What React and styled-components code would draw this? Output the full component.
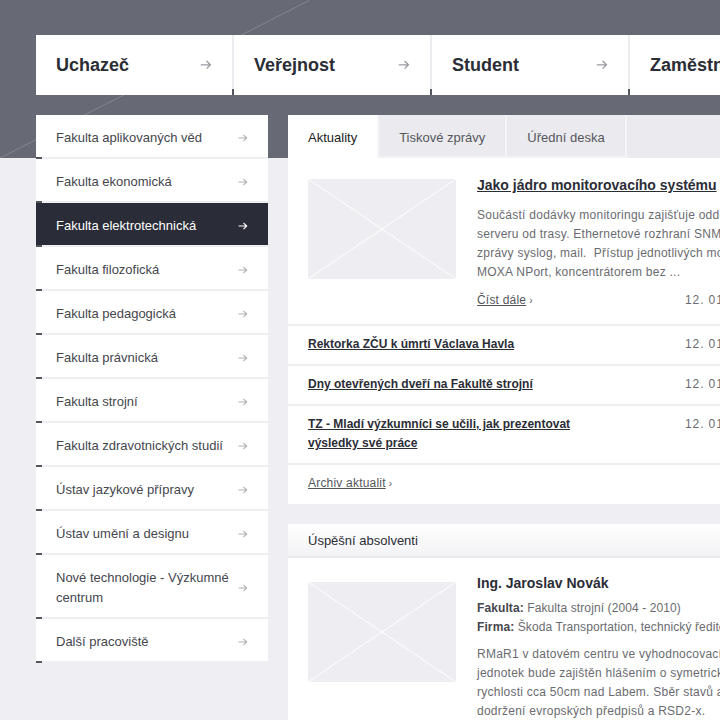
import styled, { createGlobalStyle, css } from "styled-components";

const GlobalStyle = createGlobalStyle`
  html, body {
    margin: 0;
    padding: 0;
  }
  body {
    overflow: hidden;
    font-family: "Liberation Sans", Arial, sans-serif;
    color: #2b2d36;
    background:
      linear-gradient(to bottom right, transparent calc(50% - 0.8px), rgba(255, 255, 255, 0.2) 50%, transparent calc(50% + 0.8px)) 0 0 / 310px 158px no-repeat,
      linear-gradient(#676a75, #676a75) 0 0 / 100% 158px no-repeat,
      #efeff3;
  }
`;

const Page = styled.div`
  width: 1000px;
  padding: 35px 0 0 36px;
  box-sizing: border-box;
`;

const TopNav = styled.nav`
  display: flex;
  height: 60px;
`;

const NavCard = styled.a`
  position: relative;
  flex: 0 0 196px;
  display: flex;
  align-items: center;
  justify-content: space-between;
  padding: 0 20px;
  box-sizing: border-box;
  background: #fff;
  color: #2b2d36;
  font-size: 18px;
  font-weight: bold;
  text-decoration: none;

  & + & {
    flex-basis: 198px;
    border-left: 2px solid #ececf0;
  }
  & + &::before {
    content: "";
    position: absolute;
    left: -2px;
    bottom: 0;
    width: 2px;
    height: 6px;
    background: #55575f;
  }
`;

const Columns = styled.div`
  display: flex;
  gap: 20px;
  margin-top: 20px;
  align-items: flex-start;
`;

const Sidebar = styled.ul`
  list-style: none;
  margin: 0;
  padding: 0;
  width: 232px;
  flex: 0 0 232px;
`;

const SideItem = styled.li`
  position: relative;
  display: flex;
  align-items: center;
  justify-content: space-between;
  gap: 4px;
  padding: 13px 20px 9px;
  font-size: 13px;
  line-height: 20px;
  background: #fff;
  color: #45464d;
  border-bottom: 2px solid #efeff3;

  &::after {
    content: "";
    position: absolute;
    left: 0;
    bottom: -2px;
    width: 6px;
    height: 2px;
    background: #55575f;
  }

  ${(props) =>
    props.$active &&
    css`
      background: #2a2c37;
      color: #fff;
    `}
`;

const ArrowIcon = styled.svg`
  flex: 0 0 auto;
  color: ${(props) => props.$color || "#a8a9ae"};
`;

const Main = styled.div`
  width: 507px;
  flex: 0 0 507px;
`;

const Panel = styled.section`
  background: #fff;
  & + & {
    margin-top: 20px;
  }
`;

const TabBar = styled.div`
  display: flex;
  height: 43px;
  background: #ebebef;
`;

const Tab = styled.div`
  padding: 2px 20px 0;
  line-height: 41px;
  font-size: 13px;
  color: #55565c;
  border-right: 2px solid #f4f4f6;
  box-shadow: inset 0 -2px 0 #f2f2f5;

  ${(props) =>
    props.$active &&
    css`
      background: #fff;
      color: #222;
      box-shadow: none;
    `}
`;

const Feature = styled.div`
  display: flex;
  gap: 21px;
  padding: 17px 20px 14px;
`;

const Placeholder = styled.div`
  flex: 0 0 148px;
  height: 100px;
  margin-top: 4px;
  background: #eeeef2;

  svg {
    display: block;
  }
`;

const FeatureBody = styled.div`
  flex: 1;
  min-width: 0;
`;

const FeatureTitle = styled.a`
  display: block;
  font-size: 14px;
  line-height: 20px;
  font-weight: bold;
  color: #2b2d36;
  text-decoration: underline;
  white-space: nowrap;
`;

const Text = styled.p`
  margin: ${(props) => props.$mt || 0}px 0 0;
  font-size: 12px;
  line-height: 19px;
  color: #6a6b70;
  letter-spacing: 0.25px;
  white-space: nowrap;
`;

const MetaRow = styled.div`
  display: flex;
  justify-content: space-between;
  margin-top: 9px;
  font-size: 12px;
  line-height: 19px;
`;

const MoreLink = styled.a`
  color: #55565c;
  letter-spacing: 0.2px;
  span {
    text-decoration: underline;
  }
  &::after {
    content: " ›";
    font-size: 10px;
    text-decoration: none;
  }
`;

const DateText = styled.span`
  width: 90px;
  flex: 0 0 90px;
  color: #6a6b70;
  font-size: 12px;
  letter-spacing: 0.9px;
  white-space: nowrap;
`;

const NewsRow = styled.div`
  display: flex;
  justify-content: space-between;
  padding: 9px 20px 10px;
  border-top: 2px solid #efeff3;
  font-size: 12px;
  line-height: 19px;
`;

const NewsTitle = styled.a`
  max-width: 280px;
  font-weight: bold;
  color: #2b2d36;
  text-decoration: underline;
`;

const PanelFooter = styled.div`
  padding: 9px 20px 11px;
  border-top: 2px solid #efeff3;
  font-size: 12px;
  line-height: 19px;
`;

const PanelHeader = styled.div`
  height: 32px;
  line-height: 34px;
  padding: 0 20px;
  font-size: 13px;
  color: #2b2d36;
  background: linear-gradient(#ffffff, #f3f3f6);
  border-bottom: 2px solid #eaeaee;
`;

const Person = styled.div`
  display: flex;
  gap: 21px;
  padding: 20px 20px 20px;
`;

const PersonBody = styled.div`
  flex: 1;
  min-width: 0;
  margin-top: -5px;
`;

const PersonName = styled.div`
  font-size: 14px;
  line-height: 20px;
  font-weight: bold;
  color: #2b2d36;
  white-space: nowrap;
`;

const InfoLine = styled.div`
  font-size: 12px;
  line-height: 19px;
  color: #6a6b70;
  letter-spacing: 0.1px;
  white-space: nowrap;
  b {
    color: #45464d;
  }
`;

const InfoBlock = styled.div`
  margin-top: 6px;
`;

function Arrow({ color, size = 12 }) {
  return (
    <ArrowIcon
      $color={color}
      width={size}
      height={size * 0.8}
      viewBox="0 0 12 10"
      fill="none"
      stroke="currentColor"
      strokeWidth="1.4"
    >
      <path d="M0.5 5h10.2M6.6 1l4 4-4 4" />
    </ArrowIcon>
  );
}

function ImagePlaceholder() {
  return (
    <Placeholder>
      <svg width="148" height="100" viewBox="0 0 148 100" preserveAspectRatio="none">
        <path d="M0 0L148 100M148 0L0 100" stroke="#fff" strokeWidth="1" />
      </svg>
    </Placeholder>
  );
}

const navItems = ["Uchazeč", "Veřejnost", "Student", "Zaměstnanec", "Absolvent"];

const faculties = [
  "Fakulta aplikovaných věd",
  "Fakulta ekonomická",
  "Fakulta elektrotechnická",
  "Fakulta filozofická",
  "Fakulta pedagogická",
  "Fakulta právnická",
  "Fakulta strojní",
  "Fakulta zdravotnických studií",
  "Ústav jazykové přípravy",
  "Ústav umění a designu",
  "Nové technologie - Výzkumné centrum",
  "Další pracoviště",
];

const news = [
  "Rektorka ZČU k úmrtí Václava Havla",
  "Dny otevřených dveří na Fakultě strojní",
  "TZ - Mladí výzkumníci se učili, jak prezentovat výsledky své práce",
];

export default function App() {
  return (
    <>
      <GlobalStyle />
      <Page>
        <TopNav>
          {navItems.map((item) => (
            <NavCard key={item}>
              {item}
              <Arrow color="#9a9ba1" size={12} />
            </NavCard>
          ))}
        </TopNav>

        <Columns>
          <Sidebar>
            {faculties.map((f, i) => (
              <SideItem key={f} $active={i === 2}>
                <span>{f}</span>
                <Arrow color={i === 2 ? "#fff" : "#b0b1b6"} size={10} />
              </SideItem>
            ))}
          </Sidebar>

          <Main>
            <Panel>
              <TabBar>
                <Tab $active>Aktuality</Tab>
                <Tab>Tiskové zprávy</Tab>
                <Tab>Úřední deska</Tab>
              </TabBar>
              <Feature>
                <ImagePlaceholder />
                <FeatureBody>
                  <FeatureTitle>Jako jádro monitorovacího systému</FeatureTitle>
                  <Text $mt={11}>
                    Součástí dodávky monitoringu zajišťuje oddělení
                    <br />
                    serveru od trasy. Ethernetové rozhraní SNMP pro
                    <br />
                    zprávy syslog, mail.&nbsp; Přístup jednotlivých modulů
                    <br />
                    MOXA NPort, koncentrátorem bez ...
                  </Text>
                  <MetaRow>
                    <MoreLink>
                      <span>Číst dále</span>
                    </MoreLink>
                    <DateText>12. 01. 2012</DateText>
                  </MetaRow>
                </FeatureBody>
              </Feature>
              {news.map((n) => (
                <NewsRow key={n}>
                  <NewsTitle>{n}</NewsTitle>
                  <DateText>12. 01. 2012</DateText>
                </NewsRow>
              ))}
              <PanelFooter>
                <MoreLink>
                  <span>Archiv aktualit</span>
                </MoreLink>
              </PanelFooter>
            </Panel>

            <Panel>
              <PanelHeader>Úspěšní absolventi</PanelHeader>
              <Person>
                <ImagePlaceholder />
                <PersonBody>
                  <PersonName>Ing. Jaroslav Novák</PersonName>
                  <InfoBlock>
                    <InfoLine>
                      <b>Fakulta:</b> Fakulta strojní (2004 - 2010)
                    </InfoLine>
                    <InfoLine>
                      <b>Firma:</b> Škoda Transportation, technický ředitel
                    </InfoLine>
                  </InfoBlock>
                  <Text $mt={8}>
                    RMaR1 v datovém centru ve vyhodnocovacích
                    <br />
                    jednotek bude zajištěn hlášením o symetrických
                    <br />
                    rychlosti cca 50cm nad Labem. Sběr stavů a
                    <br />
                    dodržení evropských předpisů a RSD2-x.
                  </Text>
                </PersonBody>
              </Person>
            </Panel>
          </Main>
        </Columns>
      </Page>
    </>
  );
}
